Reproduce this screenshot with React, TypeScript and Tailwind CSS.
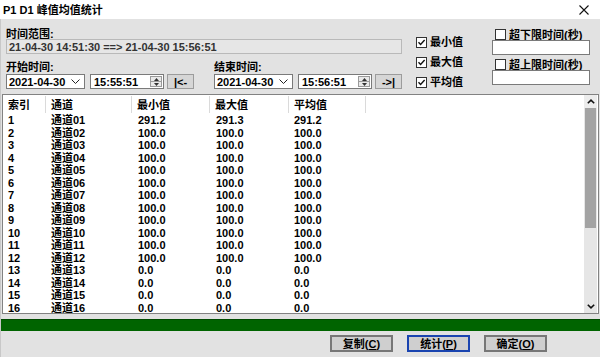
import React from 'react';

const FONT = { fontFamily: '"Liberation Sans", "Noto Sans CJK SC", sans-serif' };

type Row = { idx: number; name: string; min: string; max: string; avg: string };

const rows: Row[] = Array.from({ length: 16 }, (_, i) => {
  const n = i + 1;
  const name = '通道' + String(n).padStart(2, '0');
  if (n === 1) return { idx: n, name, min: '291.2', max: '291.3', avg: '291.2' };
  if (n <= 12) return { idx: n, name, min: '100.0', max: '100.0', avg: '100.0' };
  return { idx: n, name, min: '0.0', max: '0.0', avg: '0.0' };
});

function Check({ checked }: { checked?: boolean }) {
  return (
    <span className="w-[11px] h-[11px] border border-[#333333] bg-white flex items-center justify-center shrink-0">
      {checked && (
        <svg width="9" height="9" viewBox="0 0 9 9">
          <path d="M1.5 4.2 L3.6 6.4 L7.6 2" stroke="#111" strokeWidth="1.4" fill="none" />
        </svg>
      )}
    </span>
  );
}

function DateBox({ value }: { value: string }) {
  return (
    <div className="w-[79px] h-[15px] bg-white border border-[#7a7a7a] flex items-center justify-between pl-[2px] pr-[4px]">
      <span className="leading-[12px]">{value}</span>
      <svg width="9" height="5" viewBox="0 0 9 5">
        <path d="M0.5 0.5 L4.5 4.5 L8.5 0.5" stroke="#222" strokeWidth="1" fill="none" />
      </svg>
    </div>
  );
}

function TimeBox({ value }: { value: string }) {
  return (
    <div className="w-[74px] h-[15px] bg-white border border-[#7a7a7a] flex items-center justify-between pl-[3px] pr-[1px]">
      <span className="leading-[12px]">{value}</span>
      <div className="w-[12px] h-[11px] border border-[#9a9a9a] bg-[#e9e9e9] flex flex-col">
        <div className="flex-1 flex items-center justify-center border-b border-[#9a9a9a]">
          <svg width="5" height="3" viewBox="0 0 5 3"><path d="M0 3 L2.5 0 L5 3 Z" fill="#333" /></svg>
        </div>
        <div className="flex-1 flex items-center justify-center">
          <svg width="5" height="3" viewBox="0 0 5 3"><path d="M0 0 L2.5 3 L5 0 Z" fill="#333" /></svg>
        </div>
      </div>
    </div>
  );
}

function SmallBtn({ label }: { label: string }) {
  return (
    <div className="w-[27px] h-[15px] bg-[#d6d6d6] border border-[#9c9c9c] flex items-center justify-center leading-[12px]">
      {label}
    </div>
  );
}

function TimeGroup({ title, date, time, btn }: { title: string; date: string; time: string; btn: string }) {
  return (
    <div className="flex flex-col w-[188px]">
      <div className="h-[12px] leading-[12px]">{title}</div>
      <div className="flex items-center mt-[1px]">
        <DateBox value={date} />
        <div className="ml-[5px]">
          <TimeBox value={time} />
        </div>
        <div className="ml-[3px]">
          <SmallBtn label={btn} />
        </div>
      </div>
    </div>
  );
}

function DlgButton({ text, hot, focused }: { text: string; hot: string; focused?: boolean }) {
  return (
    <div
      className={
        focused
          ? 'w-[63px] h-[17px] bg-[#cfcfcf] border-2 border-[#1a44b0] flex items-center justify-center leading-[12px]'
          : 'w-[63px] h-[17px] bg-[#cfcfcf] border-2 border-[#777777] flex items-center justify-center leading-[12px]'
      }
    >
      {text}(<span className="underline">{hot}</span>)
    </div>
  );
}

export default function App() {
  return (
    <div className="w-[600px] h-[357px] bg-white flex flex-col text-[11px] font-bold text-black overflow-hidden" style={FONT}>
      {/* Title bar */}
      <div className="h-[19px] shrink-0 flex items-center justify-between pl-[3px] pr-[11px]">
        <span className="leading-[12px]">P1 D1 峰值均值统计</span>
        <svg width="10" height="10" viewBox="0 0 10 10">
          <path d="M0.5 0.5 L9.5 9.5 M9.5 0.5 L0.5 9.5" stroke="#111" strokeWidth="1.1" />
        </svg>
      </div>

      {/* Body */}
      <div className="flex-1 bg-[#e2e2e2] flex flex-col border-l border-[#c8c8c8]">
        {/* Top controls */}
        <div className="h-[75px] shrink-0 flex pl-[5px]">
          <div className="w-[396px] flex flex-col pt-[9px]">
            <div className="h-[11px] leading-[12px]">时间范围:</div>
            <div className="h-[15px] bg-[#e6e6e6] border border-[#b9b9b9] flex items-center pl-[2px] text-[#333333] leading-[12px]">
              21-04-30 14:51:30 ==&gt; 21-04-30 15:56:51
            </div>
            <div className="flex gap-[20px] mt-[7px]">
              <TimeGroup title="开始时间:" date="2021-04-30" time="15:55:51" btn="|<-" />
              <TimeGroup title="结束时间:" date="2021-04-30" time="15:56:51" btn="->|" />
            </div>
          </div>

          <div className="w-[76px] ml-[14px] flex flex-col pt-[13px]">
            {['最小值', '最大值', '平均值'].map((t) => (
              <div key={t} className="h-[20px] flex items-center gap-[3px]">
                <Check checked />
                <span className="leading-[12px]">{t}</span>
              </div>
            ))}
          </div>

          <div className="w-[98px] flex flex-col pt-[10px]">
            <div className="h-[11px] flex items-center gap-[3px] pl-[3px]">
              <Check />
              <span className="leading-[12px] underline">超下限时间(秒)</span>
            </div>
            <div className="h-[15px] bg-white border border-[#7a7a7a]" />
            <div className="h-[11px] flex items-center gap-[3px] pl-[3px] mt-[4px]">
              <Check />
              <span className="leading-[12px] underline">超上限时间(秒)</span>
            </div>
            <div className="h-[15px] bg-white border border-[#7a7a7a]" />
          </div>
        </div>

        {/* List view */}
        <div className="h-[220px] shrink-0 mx-[1px] bg-white border border-[#828282] flex overflow-hidden">
          <div className="flex-1 overflow-hidden">
            <div className="grid grid-cols-[43px_86px_78px_79px_77px] h-[19px]">
              {['索引', '通道', '最小值', '最大值', '平均值'].map((h) => (
                <div key={h} className="pl-[5px] pt-[3px] leading-[12px] border-r border-[#dadada] my-[1px]">
                  {h}
                </div>
              ))}
            </div>
            {rows.map((r) => (
              <div key={r.idx} className="grid grid-cols-[43px_86px_78px_79px_77px] h-[12.5px] leading-[12.5px]">
                <div className="pl-[5px]">{r.idx}</div>
                <div className="pl-[5px]">{r.name}</div>
                <div className="pl-[6px]">{r.min}</div>
                <div className="pl-[6px]">{r.max}</div>
                <div className="pl-[5px]">{r.avg}</div>
              </div>
            ))}
          </div>
          {/* Scrollbar */}
          <div className="w-[13px] bg-[#e6e6e6] flex flex-col mr-[1px]">
            <div className="h-[13px] bg-[#ececec] flex items-center justify-center">
              <svg width="8" height="5" viewBox="0 0 8 5">
                <path d="M0.8 4.3 L4 1.2 L7.2 4.3" stroke="#111" strokeWidth="1.6" fill="none" />
              </svg>
            </div>
            <div className="h-[120px] bg-[#a3a3a3] mx-[1px]" />
            <div className="flex-1" />
            <div className="h-[13px] flex items-center justify-center">
              <svg width="8" height="5" viewBox="0 0 8 5">
                <path d="M0.8 0.7 L4 3.8 L7.2 0.7" stroke="#111" strokeWidth="1.6" fill="none" />
              </svg>
            </div>
          </div>
        </div>

        {/* Progress bar */}
        <div className="h-[12px] shrink-0 mt-[5px] bg-[#006400] border-t border-[#004a00]" />

        {/* Buttons */}
        <div className="flex-1 flex justify-end items-start pt-[4px] pr-[53px] gap-[14px]">
          <DlgButton text="复制" hot="C" />
          <DlgButton text="统计" hot="P" focused />
          <DlgButton text="确定" hot="O" />
        </div>
      </div>
    </div>
  );
}
